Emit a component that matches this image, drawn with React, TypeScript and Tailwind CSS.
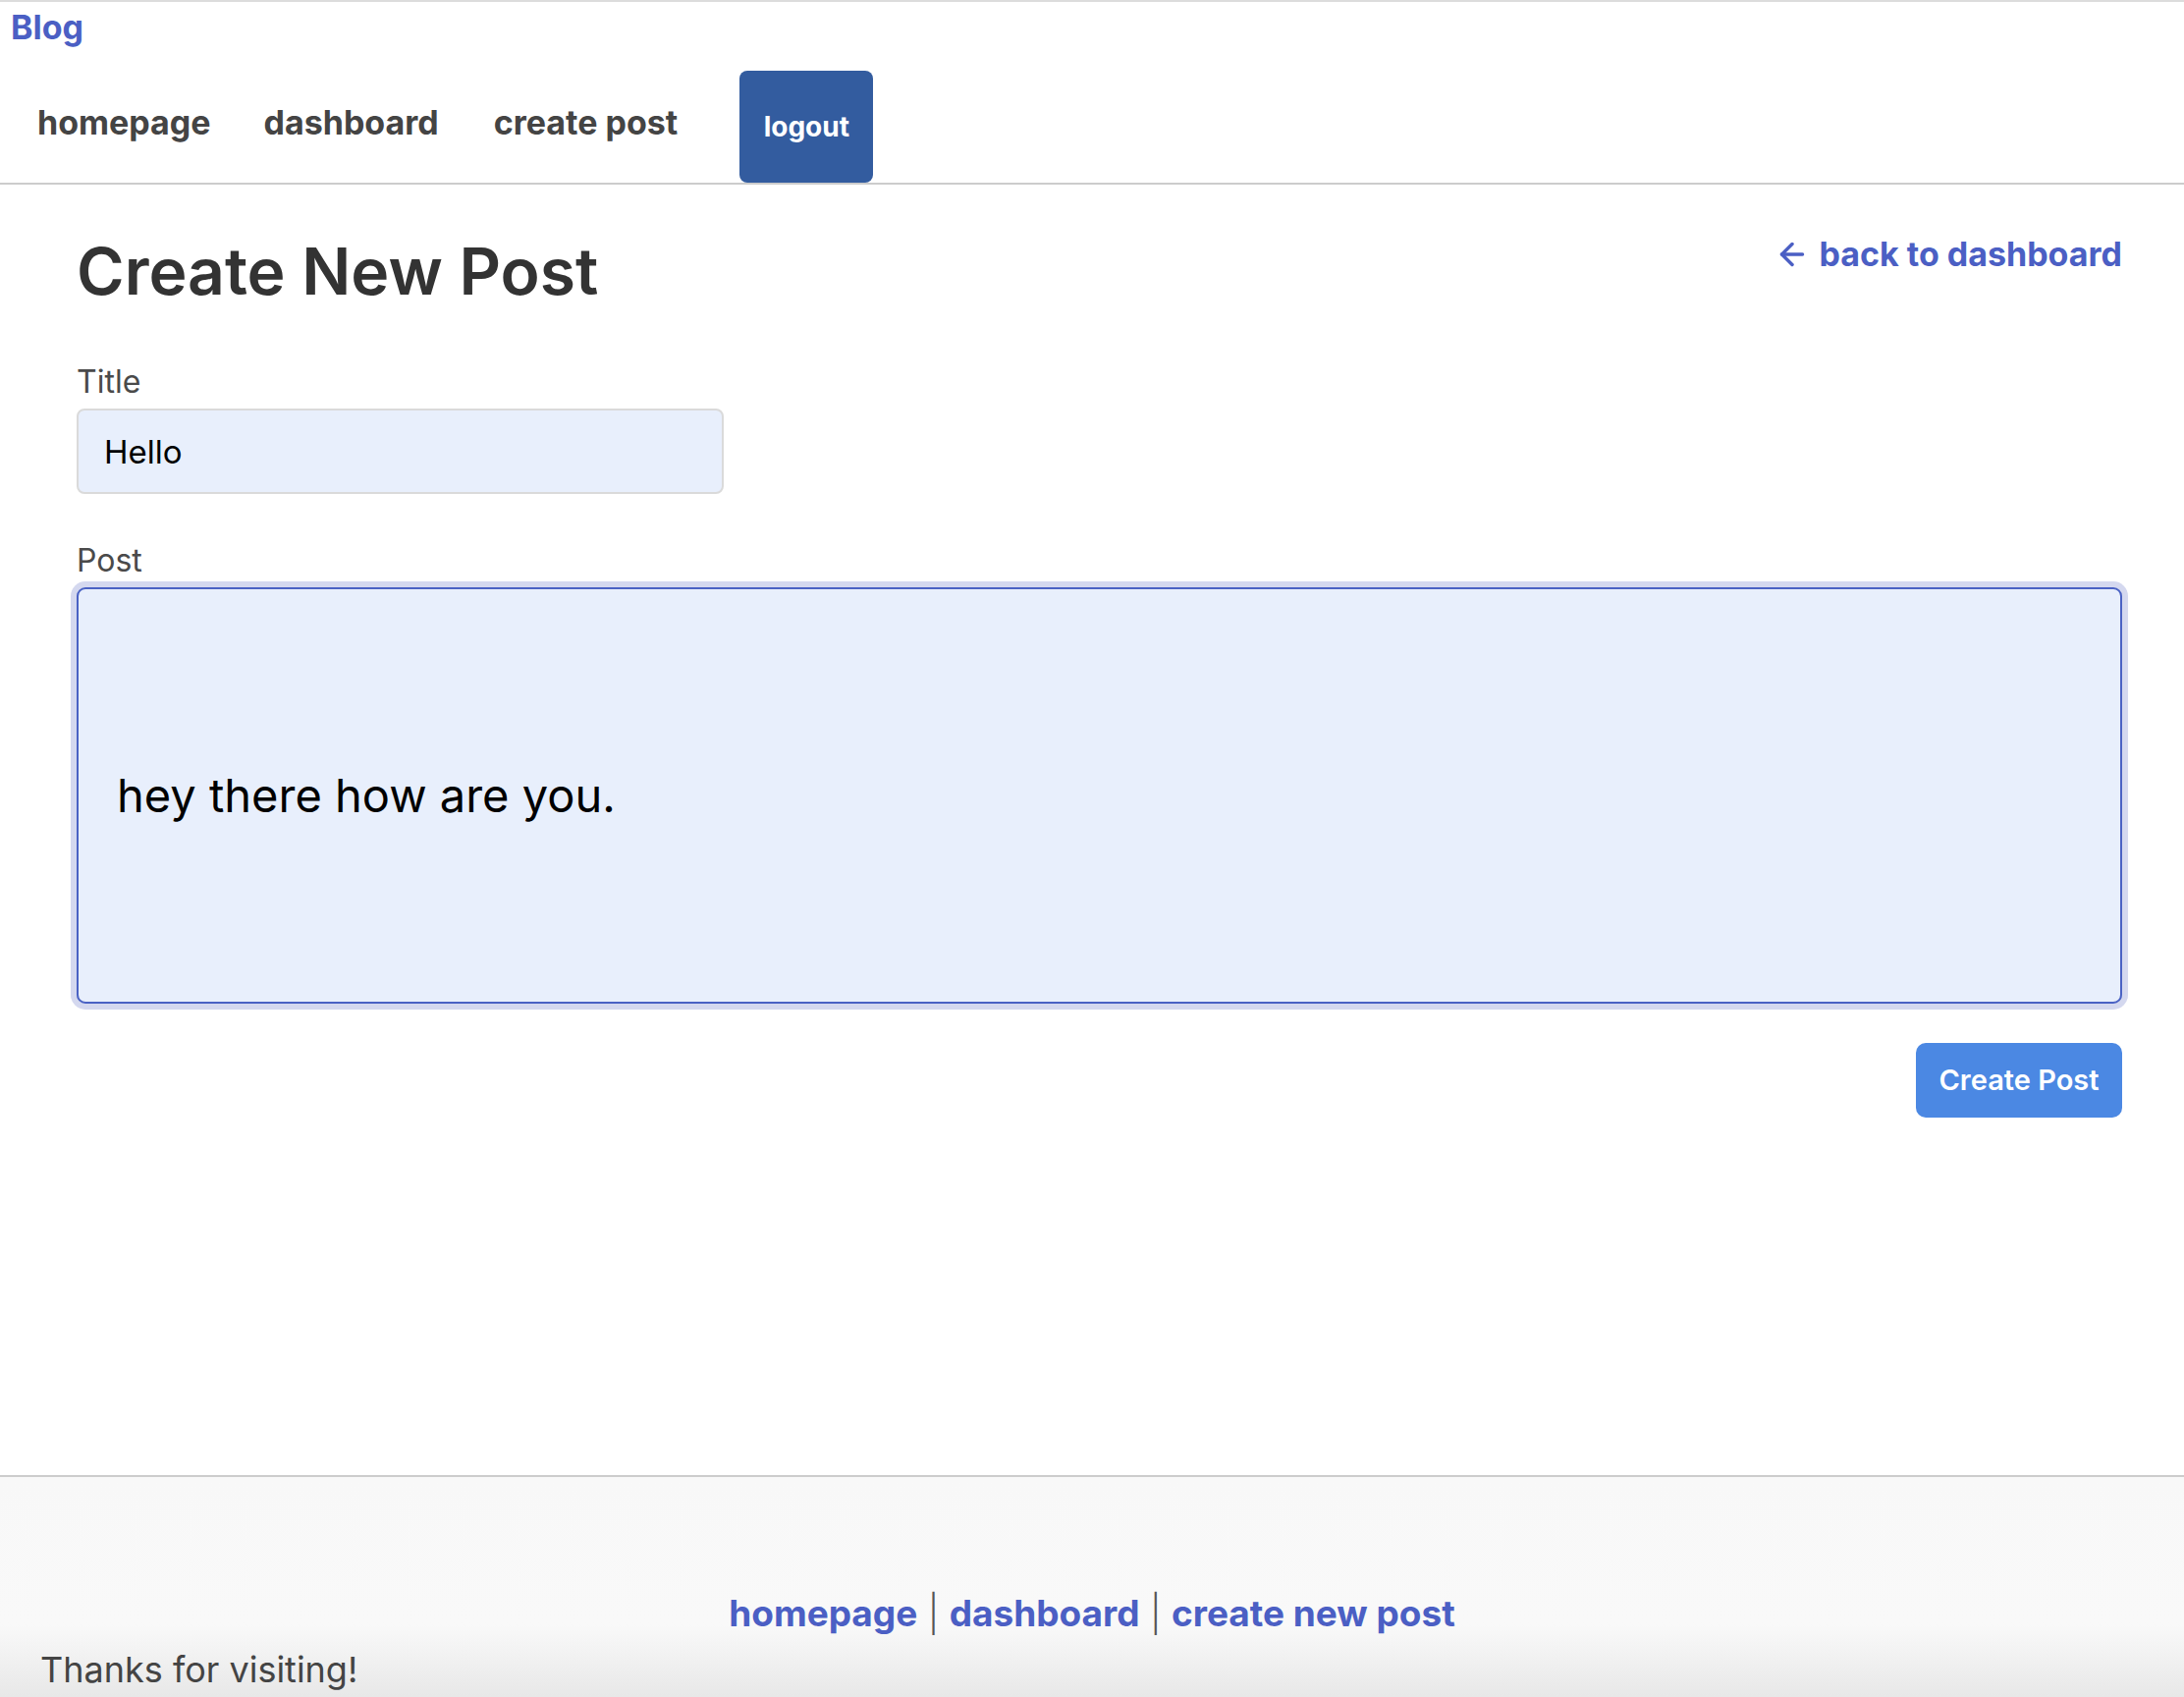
import { ArrowLeft } from "lucide-react";

const font = { fontFamily: "Inter, 'Liberation Sans', sans-serif" };

const Header = () => {
  return (
    <header className="border-t-2 border-t-[#dcdcdc] border-b-2 border-b-[#cccccc]">
      <div className="pl-[11px] text-[34px] font-bold leading-[52px] text-[#4b5fc4]">
        Blog
      </div>
      <nav className="flex items-start h-[132px] pl-[38px]">
        <a className="mt-[51px] text-[34px] font-bold leading-[40px] text-[#444]">homepage</a>
        <a className="mt-[51px] ml-[54px] text-[34px] font-bold leading-[40px] text-[#444]">dashboard</a>
        <a className="mt-[51px] ml-[56px] text-[34px] font-bold leading-[40px] text-[#444]">create post</a>
        <button className="mt-[18px] ml-[63px] h-[114px] w-[136px] rounded-[8px] bg-[#335c9f] text-[28px] font-bold text-white">
          logout
        </button>
      </nav>
    </header>
  );
};

const CreatePost = () => {
  return (
    <main className="pl-[78px] pr-[63px] pt-[49px] pb-[364px]">
      <div className="flex justify-between items-start">
        <h1 className="text-[66px] font-semibold leading-[78px] text-[#333]">Create New Post</h1>
        <a className="flex items-center gap-[10px] text-[34px] font-bold leading-[44px] text-[#4b5fc4]">
          <ArrowLeft size={36} strokeWidth={2.3} />
          back to dashboard
        </a>
      </div>

      <label className="block mt-[54px] text-[32px] leading-[40px] text-[#4a4a4a]">Title</label>
      <input
        className="mt-[7px] block h-[87px] w-[659px] rounded-[8px] border-2 border-[#dadada] bg-[#e8effc] px-[26px] text-[33px] text-black outline-none"
        defaultValue="Hello"
      />

      <label className="block mt-[48px] text-[32px] leading-[40px] text-[#4a4a4a]">Post</label>
      <textarea
        className="mt-[7px] block h-[424px] w-full resize-none rounded-[9px] border-2 border-[#4a62c4] bg-[#e8effc] px-[39px] pt-[181px] text-[47px] leading-[58px] text-black outline-none shadow-[0_0_0_6px_#d4d8ef]"
        defaultValue="hey there how are you."
      />

      <div className="flex justify-end mt-[40px]">
        <button className="h-[76px] w-[210px] rounded-[10px] bg-[#4b88e3] text-[29px] font-semibold text-white">
          Create Post
        </button>
      </div>
    </main>
  );
};

const Footer = () => {
  return (
    <footer className="border-t-2 border-[#cccccc] bg-[linear-gradient(to_bottom,#f8f8f8_0px,#f9f9f9_150px,#e4e4e4_240px)] h-[260px] pt-[117px]">
      <div className="text-center text-[37px] font-bold leading-[44px] text-[#4b5fc4]">
        <a>homepage</a>
        <span className="font-light text-[#555]"> | </span>
        <a>dashboard</a>
        <span className="font-light text-[#555]"> | </span>
        <a>create new post</a>
      </div>
      <p className="mt-[13px] pl-[41px] text-[36px] leading-[44px] text-[#444]">Thanks for visiting!</p>
    </footer>
  );
};

export default function App() {
  return (
    <div style={font} className="min-h-screen bg-white">
      <Header />
      <CreatePost />
      <Footer />
    </div>
  );
}
